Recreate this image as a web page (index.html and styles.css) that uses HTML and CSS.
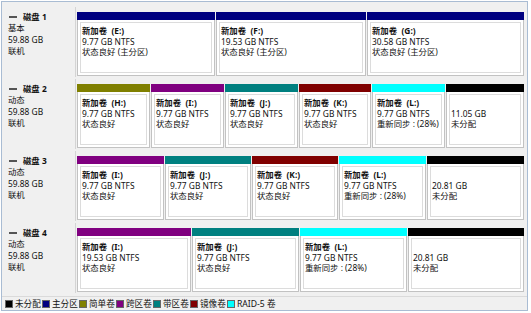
FILE: index.html
```html
<!DOCTYPE html>
<html lang="zh-CN">
<head>
<meta charset="utf-8">
<title>磁盘管理</title>
<link rel="stylesheet" href="styles.css">
</head>
<body>
<div class="frame">
  <div class="disks">
    <div class="row">
      <div class="label">
        <div class="head"><span class="dicon"></span><b>磁盘 1</b></div>
        <div>基本</div>
        <div>59.88 GB</div>
        <div>联机</div>
      </div>
      <div class="parts">
        <div class="part" style="width:138px"><div class="bar c-pri"></div><div class="box"><div class="inner"><b>新加卷&nbsp;&nbsp;(E:)</b><span>9.77 GB NTFS</span><span>状态良好 (主分区)</span></div></div></div>
        <div class="part" style="width:150px"><div class="bar c-pri"></div><div class="box"><div class="inner"><b>新加卷&nbsp;&nbsp;(F:)</b><span>19.53 GB NTFS</span><span>状态良好 (主分区)</span></div></div></div>
        <div class="part" style="width:157px"><div class="bar c-pri"></div><div class="box"><div class="inner"><b>新加卷&nbsp;&nbsp;(G:)</b><span>30.58 GB NTFS</span><span>状态良好 (主分区)</span></div></div></div>
      </div>
    </div>
    <div class="row">
      <div class="label">
        <div class="head"><span class="dicon"></span><b>磁盘 2</b></div>
        <div>动态</div>
        <div>59.88 GB</div>
        <div>联机</div>
      </div>
      <div class="parts">
        <div class="part" style="width:73px"><div class="bar c-simple"></div><div class="box"><div class="inner"><b>新加卷&nbsp;&nbsp;(H:)</b><span>9.77 GB NTFS</span><span>状态良好</span></div></div></div>
        <div class="part" style="width:73px"><div class="bar c-span"></div><div class="box"><div class="inner"><b>新加卷&nbsp;&nbsp;(I:)</b><span>9.77 GB NTFS</span><span>状态良好</span></div></div></div>
        <div class="part" style="width:73px"><div class="bar c-stripe"></div><div class="box"><div class="inner"><b>新加卷&nbsp;&nbsp;(J:)</b><span>9.77 GB NTFS</span><span>状态良好</span></div></div></div>
        <div class="part" style="width:72px"><div class="bar c-mirror"></div><div class="box"><div class="inner"><b>新加卷&nbsp;&nbsp;(K:)</b><span>9.77 GB NTFS</span><span>状态良好</span></div></div></div>
        <div class="part" style="width:73px"><div class="bar c-raid"></div><div class="box"><div class="inner"><b>新加卷&nbsp;&nbsp;(L:)</b><span>9.77 GB NTFS</span><span>重新同步 : (28%)</span></div></div></div>
        <div class="part" style="width:78px"><div class="bar c-free"></div><div class="box"><div class="inner"><b>&nbsp;</b><span>11.05 GB</span><span>未分配</span></div></div></div>
      </div>
    </div>
    <div class="row">
      <div class="label">
        <div class="head"><span class="dicon"></span><b>磁盘 3</b></div>
        <div>动态</div>
        <div>59.88 GB</div>
        <div>联机</div>
      </div>
      <div class="parts">
        <div class="part" style="width:87px"><div class="bar c-span"></div><div class="box"><div class="inner"><b>新加卷&nbsp;&nbsp;(I:)</b><span>9.77 GB NTFS</span><span>状态良好</span></div></div></div>
        <div class="part" style="width:86px"><div class="bar c-stripe"></div><div class="box"><div class="inner"><b>新加卷&nbsp;&nbsp;(J:)</b><span>9.77 GB NTFS</span><span>状态良好</span></div></div></div>
        <div class="part" style="width:86px"><div class="bar c-mirror"></div><div class="box"><div class="inner"><b>新加卷&nbsp;&nbsp;(K:)</b><span>9.77 GB NTFS</span><span>状态良好</span></div></div></div>
        <div class="part" style="width:87px"><div class="bar c-raid"></div><div class="box"><div class="inner"><b>新加卷&nbsp;&nbsp;(L:)</b><span>9.77 GB NTFS</span><span>重新同步 : (28%)</span></div></div></div>
        <div class="part" style="width:97px"><div class="bar c-free"></div><div class="box"><div class="inner"><b>&nbsp;</b><span>20.81 GB</span><span>未分配</span></div></div></div>
      </div>
    </div>
    <div class="row">
      <div class="label">
        <div class="head"><span class="dicon"></span><b>磁盘 4</b></div>
        <div>动态</div>
        <div>59.88 GB</div>
        <div>联机</div>
      </div>
      <div class="parts">
        <div class="part" style="width:114px"><div class="bar c-span"></div><div class="box"><div class="inner"><b>新加卷&nbsp;&nbsp;(I:)</b><span>19.53 GB NTFS</span><span>状态良好</span></div></div></div>
        <div class="part" style="width:107px"><div class="bar c-stripe"></div><div class="box"><div class="inner"><b>新加卷&nbsp;&nbsp;(J:)</b><span>9.77 GB NTFS</span><span>状态良好</span></div></div></div>
        <div class="part" style="width:107px"><div class="bar c-raid"></div><div class="box"><div class="inner"><b>新加卷&nbsp;&nbsp;(L:)</b><span>9.77 GB NTFS</span><span>重新同步 : (28%)</span></div></div></div>
        <div class="part" style="width:116px"><div class="bar c-free"></div><div class="box"><div class="inner"><b>&nbsp;</b><span>20.81 GB</span><span>未分配</span></div></div></div>
      </div>
    </div>
  </div>
  <div class="legend">
    <span class="item"><i class="sw c-free"></i>未分配</span>
    <span class="item"><i class="sw c-pri"></i>主分区</span>
    <span class="item"><i class="sw c-simple"></i>简单卷</span>
    <span class="item"><i class="sw c-span"></i>跨区卷</span>
    <span class="item"><i class="sw c-stripe"></i>带区卷</span>
    <span class="item"><i class="sw c-mirror"></i>镜像卷</span>
    <span class="item"><i class="sw c-raid"></i>RAID-5 卷</span>
  </div>
</div>
</body>
</html>
```

FILE: styles.css
```css
* { box-sizing: border-box; }
html, body { margin: 0; padding: 0; background: #ffffff; }
body {
  font-family: "Noto Sans", "Noto Sans CJK SC", sans-serif;
  font-size: 8.4px;
  color: #111;
  width: 531px;
  height: 313px;
  overflow: hidden;
}
.frame {
  width: 527px;
  height: 310px;
  margin: 1px 0 0 1px;
  border: 1px solid #a9bcd3;
  background: #f0f0f0;
  display: flex;
  flex-direction: column;
}
.disks {
  display: flex;
  flex-direction: column;
  gap: 2px;
  padding: 5px 1px 0 1px;
}
.row {
  display: flex;
  height: 70px;
  gap: 1px;
}
.label {
  width: 73px;
  flex: none;
  background: #f0f0f0;
  border-right: 1px solid #d4d4d4;
  padding: 4px 0 0 5px;
  line-height: 11.4px;
}
.head { display: flex; align-items: center; gap: 6px; padding-left: 1px; }
.dicon { width: 8px; height: 2px; background: #555; display: block; margin-top: 1px; }
.parts {
  flex: 1;
  display: flex;
  gap: 1px;
  padding: 5px 0 1px 0;
  background: #f0f0f0;
}
.part {
  flex: none;
  display: flex;
  flex-direction: column;
}
.bar { height: 8px; flex: none; }
.box {
  flex: 1;
  background: #fff;
  border: 1px solid #c2c2c2;
  border-top: none;
  padding: 2px;
}
.inner {
  height: 100%;
  border: 1px solid #dcdcdc;
  padding: 3px 0 0 1px;
  display: flex;
  flex-direction: column;
  line-height: 10.6px;
  white-space: nowrap;
  overflow: hidden;
}
.inner b { font-weight: 700; }
.c-pri { background: #000080; }
.c-simple { background: #808000; }
.c-span { background: #800080; }
.c-stripe { background: #008080; }
.c-mirror { background: #800000; }
.c-raid { background: #00ffff; }
.c-free { background: #000000; }
.legend {
  margin-top: auto;
  height: 14px;
  display: flex;
  align-items: center;
  padding: 0 0 0 3px;
  border-top: 1px solid #dadada;
  font-size: 8.6px;
}
.item {
  display: flex;
  align-items: center;
  gap: 2px;
  width: 37px;
  flex: none;
  white-space: nowrap;
}
.item:last-child { width: auto; }
.sw {
  display: block;
  width: 8px;
  height: 8px;
  border: 1px solid #666;
}
```
